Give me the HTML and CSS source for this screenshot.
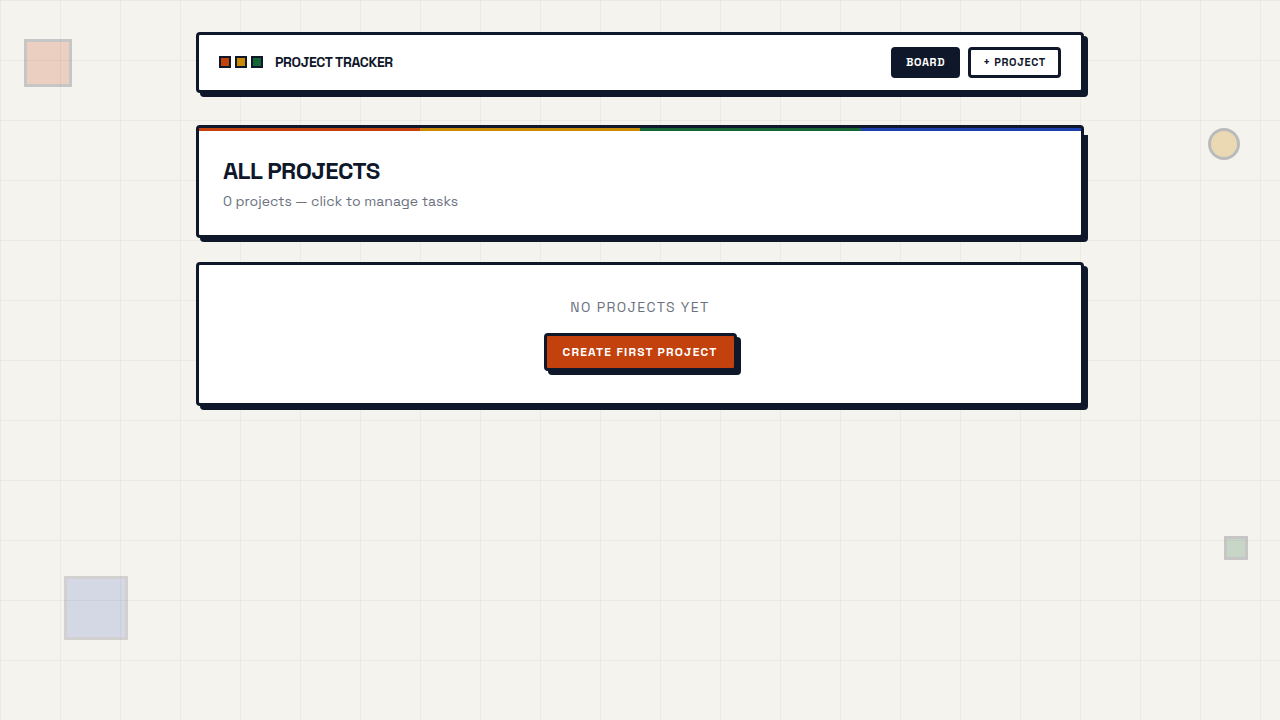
FILE: index.html
```html
<!DOCTYPE html>
<html lang="en">
<head>
  <meta charset="UTF-8" />
  <meta name="viewport" content="width=device-width, initial-scale=1.0" />
  <title>Project Tracker</title>
  <link rel="stylesheet" href="styles.css">
</head>
<body>

  <!-- Background shapes -->
  <div class="shape shape-red"></div>
  <div class="shape shape-yellow"></div>
  <div class="shape shape-blue"></div>
  <div class="shape shape-green"></div>

  <div class="container">
    <header class="card topbar">
      <div class="brand">
        <div class="brand-squares">
          <span class="red"></span>
          <span class="yellow"></span>
          <span class="green"></span>
        </div>
        <span class="brand-name">PROJECT TRACKER</span>
      </div>
      <nav class="nav">
        <button class="nav-btn active" type="button">BOARD</button>
        <button class="nav-btn" type="button">+ PROJECT</button>
      </nav>
    </header>

    <main>
      <section class="card hero">
        <div class="stripe">
          <span class="red"></span>
          <span class="yellow"></span>
          <span class="green"></span>
          <span class="blue"></span>
        </div>
        <div class="hero-body">
          <h1>ALL PROJECTS</h1>
          <p>0 projects — click to manage tasks</p>
        </div>
      </section>

      <section class="card empty">
        <p>NO PROJECTS YET</p>
        <button class="btn-primary" type="button">CREATE FIRST PROJECT</button>
      </section>
    </main>
  </div>

</body>
</html>
```

FILE: styles.css
```css
:root {
  --ink: #0f172a;
  --paper: #f5f3ee;
  --red: #c2410c;
  --yellow: #ca8a04;
  --green: #166534;
  --blue: #1e40af;
  --gray: #6b7280;
}

* {
  box-sizing: border-box;
  margin: 0;
  padding: 0;
}

body {
  min-height: 100vh;
  font-family: "Space Grotesk", Inter, "Liberation Sans", sans-serif;
  color: var(--ink);
  background-color: var(--paper);
  background-image:
    linear-gradient(rgba(15, 23, 42, 0.04) 1px, transparent 1px),
    linear-gradient(90deg, rgba(15, 23, 42, 0.04) 1px, transparent 1px);
  background-size: 60px 60px;
}

.container {
  position: relative;
  max-width: 920px;
  margin: 0 auto;
  padding: 32px 16px;
}

.card {
  background: #fff;
  border: 3px solid var(--ink);
  border-radius: 4px;
  box-shadow: 4px 4px 0 var(--ink);
}

/* Header */
.topbar {
  display: flex;
  justify-content: space-between;
  align-items: center;
  padding: 12px 20px;
  margin-bottom: 32px;
}

.brand {
  display: flex;
  align-items: center;
  gap: 12px;
  padding-bottom: 1px;
}

.brand-squares {
  display: flex;
  gap: 4px;
}

.brand-squares span {
  width: 12px;
  height: 12px;
  border: 2px solid var(--ink);
}

.red { background: var(--red); }
.yellow { background: var(--yellow); }
.green { background: var(--green); }
.blue { background: var(--blue); }

.brand-name {
  font-size: 14px;
  font-weight: 700;
  line-height: 20px;
  letter-spacing: -0.025em;
}

.nav {
  display: flex;
  gap: 8px;
}

button {
  font-family: inherit;
  font-weight: 700;
  color: var(--ink);
  border: 3px solid var(--ink);
  border-radius: 4px;
  cursor: pointer;
}

.nav-btn {
  padding: 5px 12px;
  font-size: 11px;
  line-height: 15px;
  letter-spacing: 0.06em;
  background: #fff;
}

.nav-btn.active {
  background: var(--ink);
  color: #fff;
}

/* Page title, the right shadow starts below the stripe */
.hero {
  margin-bottom: 24px;
  clip-path: polygon(0 0, 100% 0, 100% 10px, calc(100% + 4px) 10px, calc(100% + 4px) calc(100% + 4px), 0 calc(100% + 4px));
}

.stripe {
  display: flex;
  height: 3px;
}

.stripe span {
  flex: 1;
}

.hero-body {
  padding: 24px;
}

.hero h1 {
  font-size: 24px;
  font-weight: 700;
  line-height: 32px;
  letter-spacing: -0.025em;
}

.hero p {
  margin-top: 4px;
  font-size: 14px;
  line-height: 20px;
  color: var(--gray);
}

/* Empty state */
.empty {
  padding: 32px 24px;
  text-align: center;
}

.empty p {
  margin-bottom: 16px;
  font-size: 14px;
  line-height: 20px;
  letter-spacing: 0.1em;
  color: var(--gray);
}

.btn-primary {
  display: inline-block;
  padding: 8px 16px;
  font-size: 12px;
  line-height: 16px;
  letter-spacing: 0.1em;
  color: #fff;
  background: var(--red);
  box-shadow: 4px 4px 0 var(--ink);
}

/* Background shapes */
.shape {
  position: fixed;
  border: 3px solid var(--ink);
  opacity: 0.2;
}

.shape-red {
  top: 39px;
  left: 24px;
  width: 48px;
  height: 48px;
  background: var(--red);
}

.shape-yellow {
  top: 128px;
  right: 40px;
  width: 32px;
  height: 32px;
  border-radius: 50%;
  background: var(--yellow);
  opacity: 0.25;
}

.shape-blue {
  bottom: 80px;
  left: 64px;
  width: 64px;
  height: 64px;
  background: var(--blue);
  opacity: 0.15;
}

.shape-green {
  right: 32px;
  bottom: 160px;
  width: 24px;
  height: 24px;
  background: var(--green);
}
```
